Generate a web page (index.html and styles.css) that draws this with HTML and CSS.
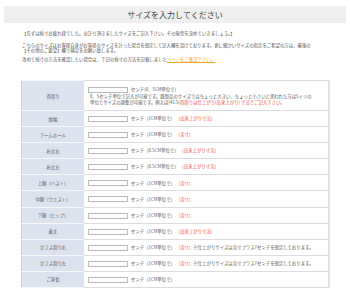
FILE: index.html
```html
<!DOCTYPE html>
<html lang="ja">
<head>
<meta charset="utf-8">
<link rel="stylesheet" href="styles.css">
</head>
<body>
<div class="page">
  <h1 class="title">サイズを入力してください</h1>
  <div class="intro">
    <p class="p1">【先ずは採寸お疲れ様でした。お計り頂きましたサイズをご記入下さい。その後型を決めていきましょう。】</p>
    <p class="p2">こちらのサイズはお客様自身がお客様のサイズを計った場合を想定して記入欄を設けております。更に細かいサイズの指定をご希望の方は、最後の<br>【その他のご要望】欄で補足をお願い致します。</p>
    <p class="p3">改めて採寸の方法を確認したい場合は、下記の採寸の方法を記載しました<a class="link" href="#">ページをご確認下さい。</a></p>
  </div>
  <table class="sizes">
    <tr class="first">
      <th>首周り</th>
      <td><span class="box"></span><span class="unit">センチ(0、5CM単位で)</span><br>0、5センチ単位で記入が可能です。既製品のサイズではちょっと大きい、ちょっと小さいと思われた方は5ミリの<br>単位でサイズの調整が可能です。例えば(41.5)<span class="red">首周りは仕上がり(出来上がり) 寸法でご記入下さい。</span></td>
    </tr>
    <tr><th>肩幅</th><td><span class="box"></span><span class="unit">センチ（1CM単位で）</span><span class="red">（出来上がり寸法）</span></td></tr>
    <tr><th>アームホール</th><td><span class="box"></span><span class="unit">センチ（1CM単位で）</span><span class="red">（実寸）</span></td></tr>
    <tr><th>裄丈右</th><td><span class="box"></span><span class="unit">センチ（0.5CM単位で）</span><span class="red">（出来上がり寸法）</span></td></tr>
    <tr><th>裄丈左</th><td><span class="box"></span><span class="unit">センチ（0.5CM単位で）</span><span class="red">（出来上がり寸法）</span></td></tr>
    <tr><th>上胴（バスト）</th><td><span class="box"></span><span class="unit">センチ（1CM単位で）</span><span class="red">（実寸）</span></td></tr>
    <tr><th>中胴（ウエスト）</th><td><span class="box"></span><span class="unit">センチ（1CM単位で）</span><span class="red">（実寸）</span></td></tr>
    <tr><th>下胴（ヒップ）</th><td><span class="box"></span><span class="unit">センチ（1CM単位で）</span><span class="red">（実寸）</span></td></tr>
    <tr><th>着丈</th><td><span class="box"></span><span class="unit">センチ（1CM単位で）</span><span class="red">（出来上がり寸法）</span></td></tr>
    <tr><th>カフス周り右</th><td><span class="box"></span><span class="unit">センチ（1CM単位で）</span><span class="red">（実寸）</span>※仕上がりサイズは実寸プラス7センチを想定しております。</td></tr>
    <tr><th>カフス周り左</th><td><span class="box"></span><span class="unit">センチ（1CM単位で）</span><span class="red">（実寸）</span>※仕上がりサイズは実寸プラス7センチを想定しております。</td></tr>
    <tr><th>ご身長</th><td><span class="box"></span><span class="unit">センチ（1CM単位で）</span></td></tr>
  </table>
</div>
</body>
</html>
```
FILE: styles.css
```css
html, body {
  margin: 0;
  padding: 0;
  background: #fff;
}
body {
  font-family: "Noto Sans CJK JP", "Noto Sans", sans-serif;
  color: #555;
}
.page {
  padding: 6px 4px 0 4px;
}
.title {
  margin: 0;
  height: 17px;
  line-height: 17px;
  background: #efefef;
  font-size: 8px;
  font-weight: normal;
  text-align: center;
  color: #444;
}
.intro {
  padding: 0 0 0 18px;
  font-size: 4.4px;
  line-height: 5.5px;
}
.intro p {
  margin: 0;
}
.p1 {
  padding-top: 8px;
}
.p2 {
  padding-top: 6px;
}
.p3 {
  padding-top: 3px;
}
.link {
  color: #f0a81e;
  text-decoration: underline;
}
.sizes {
  margin: 18px 0 0 17px;
  width: 309px;
  border-collapse: collapse;
  font-size: 4.4px;
  line-height: 6px;
  border: 1px solid #d6d6d6;
  border-right: 2px solid #e0e0e0;
}
.sizes th {
  width: 62px;
  padding: 0;
  background: #dde3ee;
  font-weight: normal;
  color: #555;
  border-top: 1px solid #f4f6fa;
  border-bottom: 1px solid #f4f6fa;
  border-left: 1px solid #d6d6d6;
  text-align: center;
}
.sizes td {
  padding: 0 0 0 4px;
  height: 15.1px;
  border-top: 1px solid #dcdcdc;
  border-bottom: 1px solid #dcdcdc;
  vertical-align: middle;
}
.first td {
  height: 29px;
  padding-left: 6px;
}
.first .box {
  margin-left: -2px;
}
.box {
  display: inline-block;
  width: 38px;
  height: 4px;
  border: 1px solid #b8b8b8;
  background: #fff;
  vertical-align: middle;
  margin-right: 3px;
}
.unit {
  margin-right: 3px;
}
.red {
  color: #f04848;
}
```
